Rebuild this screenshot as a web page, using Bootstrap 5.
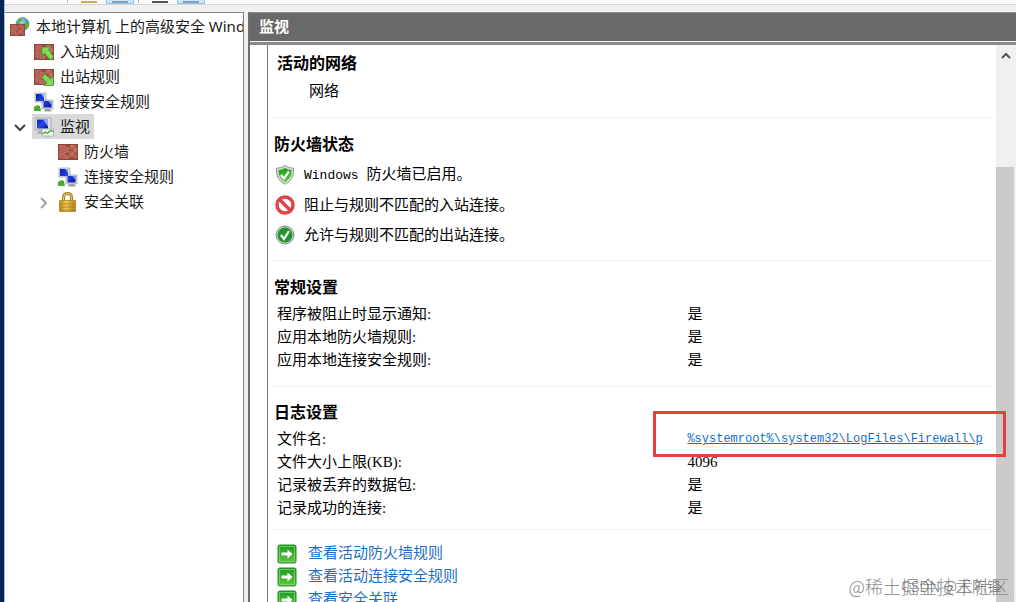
<!DOCTYPE html>
<html lang="zh-CN">
<head>
<meta charset="utf-8">
<meta name="viewport" content="width=device-width, initial-scale=1">
<title>高级安全 Windows 防火墙</title>
<link href="https://cdn.jsdelivr.net/npm/bootstrap@5.3.0/dist/css/bootstrap.min.css" rel="stylesheet">
<style>
  body { font-family: "Liberation Serif", "Noto Sans CJK SC", serif; font-size: 15px; line-height: 23px; color: #000; background: #f0f0f0; }
  .desktop-edge { width: 4px; background: #06245c; }
  .window { border-left: 1px solid #a9bccb; }
  .tools { height: 5px; background: #fdfdfd; border-bottom: 1px solid #d9d9d9; padding-left: 62px; }
  .tools .vr { min-height: 0; height: 3px; }
  .tool { height: 4px; border: 0; padding: 0 5px; background: transparent; }
  .tool span { display: block; height: 2px; }
  .tool.pressed { background: #cbe6fb; border: 1px solid #90c5ee; border-top: 0; }
  .panes { padding-top: 7px; }

  .tree-pane { width: 239px; margin-right: 4px; background: #fff; border: 1px solid #7f848a; border-left: 0; border-bottom: 0; padding: 1px 0 0 1px; font-family: "Noto Sans", "Noto Sans CJK SC", sans-serif; color: #1a1a1a; }
  .tree-pane ul ul { padding-left: 24px; }
  .tree-pane .level-top { padding-left: 4px; }
  .branch { display: flex; align-items: center; height: 25px; padding-left: 6px; }
  .twisty { width: 16px; height: 16px; margin-right: 4px; padding: 0; border: 0; background: transparent; display: flex; flex: none; }
  .node { display: flex; align-items: center; gap: 6px; height: 25px; padding: 0 4px 0 2px; border: 0; background: transparent; color: inherit; white-space: nowrap; }
  .node.selected { background: #d9d9d9; }
  .node svg { width: 20px; height: 20px; flex: none; }

  .detail-pane { min-width: 0; border-left: 2px solid #6e6e6e; border-top: 1px solid #8b8b8b; background: #fff; }
  .pane-title { height: 28px; padding-left: 9px; background: #696969; color: #fff; font-size: 15px; font-weight: 700; line-height: 28px; margin: 0; }
  .pane-rule { height: 4px; border-top: 1px solid #f5f5f5; background: #8a8a8a; }
  .report { min-width: 0; margin-left: 17px; border-left: 1px solid #777; }
  .block { margin: 0 3px 0 5px; border-bottom: 1px solid #f1f1f1; padding-top: 14px; }
  .block h2 { font-size: 16px; line-height: 24px; font-weight: 700; margin: 0 0 3px 1px; }
  .block.network { padding: 7px 0 11px 4px; }
  .block.network h2 { margin: 0; }
  .block.network p { line-height: 30px; margin: 0 0 0 32px; }
  .block.state { padding-bottom: 10px; padding-top: 15px; }
  .state li { height: 30px; display: flex; align-items: center; gap: 9px; padding-left: 2px; }
  .state svg { width: 20px; height: 20px; }
  .block.general { padding-bottom: 14px; padding-top: 15px; }
  .block.log { padding-bottom: 9px; }
  .facts { width: 100%; table-layout: fixed; margin-left: 4px; }
  .facts th { width: 57%; font-weight: 400; padding: 0; }
  .facts td { padding: 0; }
  .halfwidth { font-family: "Liberation Mono", monospace; font-size: 13px; white-space: pre; }
  .log-path { display: block; overflow: hidden; white-space: nowrap; font-family: "Liberation Mono", monospace; font-size: 12px; color: #0a6fcd; }
  .callout-box { top: -17px; right: -9px; bottom: -6px; left: -34px; border: 3px solid #e6403c; z-index: 3; pointer-events: none; }
  .jump { padding: 12px 0 0 9px; }
  .jump a { display: flex; align-items: center; gap: 11px; color: #1b6fc9; text-decoration: none; }
  .jump svg { width: 20px; height: 20px; }

  .scroll { width: 20px; background: #f0f0f0; }
  .scroll button { height: 22px; border: 0; padding: 0; background: transparent; }
  .scroll-thumb { margin: 100px 2px 0 0; background: #cbcbcb; }

  .stamp { right: 7px; bottom: 2px; color: #8c8c8c; font-family: "Noto Sans CJK SC", sans-serif; font-weight: 300; font-size: 18px; line-height: 28px; white-space: nowrap; z-index: 4; }
  .stamp.author { right: 14px; font-size: 15px; color: #777; }
</style>
</head>
<body class="vh-100 overflow-hidden position-relative">
<svg width="0" height="0" class="position-absolute" aria-hidden="true">
  <defs>
    <linearGradient id="screen" x1="0" y1="0" x2="1" y2="1"><stop offset="0" stop-color="#0a1cb8"/><stop offset=".5" stop-color="#2a48e0"/><stop offset="1" stop-color="#0714a0"/></linearGradient>
    <linearGradient id="leaf" x1="0" y1="0" x2="0" y2="1"><stop offset="0" stop-color="#1f9a22"/><stop offset="1" stop-color="#5fc83c"/></linearGradient>
    <linearGradient id="gold" x1="0" y1="0" x2="1" y2="0"><stop offset="0" stop-color="#b8891c"/><stop offset=".4" stop-color="#f0cc5a"/><stop offset="1" stop-color="#b98217"/></linearGradient>
    <radialGradient id="sea" cx=".4" cy=".3" r=".8"><stop offset="0" stop-color="#a5dcf6"/><stop offset="1" stop-color="#1464ae"/></radialGradient>
    <symbol id="bricks" viewBox="0 0 20 16">
      <path fill="#a3493c" d="M0 0h20v16H0z"/>
      <path fill="#bd6654" d="M1 1h5v2H1zM12 1h6v2h-6zM4 5h5v2H4zM15 5h4v2h-4zM1 9h5v2H1zM11 9h6v2h-6zM5 13h5v2H5z"/>
      <path fill="none" stroke="#cf9a8c" stroke-width=".6" d="M0 4h20M0 8h20M0 12h20M7 0v4M14 0v4M3 4v4M10 4v4M17 4v4M7 8v4M14 8v4M3 12v4M10 12v4M17 12v4"/>
      <path fill="none" stroke="#8a4036" stroke-width=".8" d="M.5 .5h19v15H.5z"/>
    </symbol>
    <symbol id="wall" viewBox="0 0 20 20"><use href="#bricks" x="0" y="2" width="20" height="16"/></symbol>
    <symbol id="globe-wall" viewBox="0 0 20 20">
      <circle cx="12.500" cy="7" r="6.500" fill="url(#sea)" stroke="#376f9c" stroke-width=".6"/>
      <path fill="#58b63c" d="M8 3q3-2.500 5-1l-1 2-2 1-1 3-2-1zM15 5l3-1q2 3 .5 6l-3 2-1-3 1-2z"/>
      <use href="#bricks" x="0" y="7" width="15" height="12"/>
    </symbol>
    <symbol id="wall-in" viewBox="0 0 20 20">
      <use href="#bricks" x="0" y="2" width="20" height="16"/>
      <path fill="#7edb58" stroke="#3d962b" stroke-width=".8" d="M8 5h9l-2.500 2.700 5.300 7-3.300 3.600-6-7L8 14z"/>
    </symbol>
    <symbol id="wall-out" viewBox="0 0 20 20">
      <use href="#bricks" x="0" y="2" width="20" height="16"/>
      <path fill="#7edb58" stroke="#3d962b" stroke-width=".8" d="M19.500 18.500h-9.500l2.700-2.700-5-5.500 3.300-3.300 5.500 5L19.500 9z"/>
    </symbol>
    <symbol id="two-screens" viewBox="0 0 20 20">
      <path fill="#d9dde2" stroke="#8f959c" stroke-width=".6" d="M1 1h11v9H1zM8 8h11v9H8z"/>
      <path fill="url(#screen)" d="M2 2h8v7H2zM9.500 9h8v6.500h-8z"/>
      <path fill="#7aa3ff" d="M7 2h3v4zM14.500 9h3v4z"/>
      <path fill="#9b9fa4" d="M11 17h5l2 2.500h-8z"/>
      <path fill="#48ad35" d="M0 19v-4q3-3 6-1l1 5z"/>
    </symbol>
    <symbol id="screen-chart" viewBox="0 0 20 20">
      <path fill="#dfe2e6" stroke="#92989e" stroke-width=".7" d="M1 1h16v12H1z"/>
      <path fill="url(#screen)" d="M3 2.500h11v9H3z"/><path fill="#86abff" d="M9 2.500h5v7z"/>
      <path fill="#aeb2b7" d="M5 13h6l1 4H3z"/>
      <path fill="#f3faf1" stroke="#90a6ae" stroke-width=".7" d="M8 12h11.500v7H8z"/>
      <path fill="none" stroke="#35a22c" stroke-width="1.200" d="M8.500 17l3-2 2 1.500 3-3 3 1"/>
    </symbol>
    <symbol id="padlock" viewBox="0 0 20 20">
      <path fill="none" stroke="#a98025" stroke-width="3" d="M5.500 10V5.500q0-4 4-4t4 4V10"/>
      <path fill="none" stroke="#ead184" stroke-width="1" d="M5.500 10V5.500q0-4 4-4t4 4V10"/>
      <path fill="url(#gold)" stroke="#a87918" stroke-width=".7" d="M1.500 8.500h16v11h-16z"/>
      <path stroke="#a57716" stroke-width=".8" d="M2 12h15M2 15h15M2 18h15"/>
    </symbol>
    <symbol id="go" viewBox="0 0 20 20">
      <rect x="1" y="1" width="18" height="18" rx="1.500" fill="url(#leaf)" stroke="#259127" />
      <path fill="none" stroke="#8bd777" stroke-width=".7" d="M2.500 2.500h15v15h-15z"/>
      <path fill="#fff" d="M4.500 8.500h6V5.500l5 4.500-5 4.500v-3H4.500z"/>
    </symbol>
  </defs>
</svg>

<div class="d-flex h-100">
  <div class="desktop-edge flex-shrink-0"></div>
  <div class="window d-flex flex-column flex-grow-1 overflow-hidden">
    <div class="tools d-flex flex-shrink-0" role="toolbar" aria-label="工具栏">
      <div class="vr"></div>
      <button class="tool ms-2" aria-label="打开"><span class="px-2" style="background:#cda956"></span></button>
      <button class="tool pressed ms-1" aria-label="显示控制台树"><span class="px-2" style="background:#829fb6"></span></button>
      <div class="vr ms-1"></div>
      <button class="tool ms-2" aria-label="导出列表"><span class="px-2" style="background:#4d5363"></span></button>
      <button class="tool pressed ms-1" aria-label="显示操作窗格"><span class="px-2" style="background:#829fb6"></span></button>
    </div>

    <div class="panes d-flex flex-grow-1">
      <nav class="tree-pane flex-shrink-0 overflow-hidden" aria-label="控制台树">
        <ul class="list-unstyled mb-0">
          <li>
            <div class="level-top"><button class="node ps-0"><svg><use href="#globe-wall"/></svg>本地计算机 上的高级安全 Windows 防火墙</button></div>
            <ul class="list-unstyled ps-0">
              <li class="branch"><span class="twisty"></span><button class="node"><svg><use href="#wall-in"/></svg>入站规则</button></li>
              <li class="branch"><span class="twisty"></span><button class="node"><svg><use href="#wall-out"/></svg>出站规则</button></li>
              <li class="branch"><span class="twisty"></span><button class="node"><svg><use href="#two-screens"/></svg>连接安全规则</button></li>
              <li>
                <div class="branch"><button class="twisty" aria-label="折叠"><svg viewBox="0 0 16 16"><path d="M3 6l5 5 5-5" fill="none" stroke="#444" stroke-width="2"/></svg></button><button class="node selected"><svg><use href="#screen-chart"/></svg>监视</button></div>
                <ul class="list-unstyled">
                  <li class="branch"><span class="twisty"></span><button class="node"><svg><use href="#wall"/></svg>防火墙</button></li>
                  <li class="branch"><span class="twisty"></span><button class="node"><svg><use href="#two-screens"/></svg>连接安全规则</button></li>
                  <li class="branch"><button class="twisty" aria-label="展开"><svg viewBox="0 0 16 16"><path d="M5 4l5 5-5 5" fill="none" stroke="#a0a0a0" stroke-width="2"/></svg></button><button class="node"><svg><use href="#padlock"/></svg>安全关联</button></li>
                </ul>
              </li>
            </ul>
          </li>
        </ul>
      </nav>

      <main class="detail-pane flex-grow-1 d-flex flex-column">
        <h1 class="pane-title flex-shrink-0">监视</h1>
        <div class="pane-rule flex-shrink-0"></div>
        <div class="d-flex flex-grow-1">
          <div class="report flex-grow-1">
            <section class="block network">
              <h2>活动的网络</h2>
              <p>网络</p>
            </section>
            <section class="block state">
              <h2>防火墙状态</h2>
              <ul class="list-unstyled mb-0">
                <li><svg viewBox="0 0 20 20"><path d="M10 .7q4 2.500 8.500 2.500 1 12-8.500 16Q.5 15.200 1.500 3.200 6 3.200 10 .7z" fill="#d8dcd8" stroke="#8f9a91"/><path d="M10 3q3 1.800 6.500 2 .5 8.500-6.500 12Q3 13.500 3.500 5 7 4.800 10 3z" fill="url(#leaf)"/><path d="M6 10l3 3.500L14 6.500" fill="none" stroke="#fff" stroke-width="2.200"/></svg><span><span class="halfwidth">Windows </span>防火墙已启用。</span></li>
                <li><svg viewBox="0 0 20 20"><circle cx="10" cy="10" r="8" fill="#fff" stroke="#dc4649" stroke-width="3.500"/><path d="M4.500 4.500l11 11" stroke="#dc4649" stroke-width="3.500"/></svg>阻止与规则不匹配的入站连接。</li>
                <li><svg viewBox="0 0 20 20"><circle cx="10" cy="10" r="9" fill="#c9cfc9" stroke="#8b958c"/><circle cx="10" cy="10" r="7.500" fill="#23942a"/><path d="M6 10l3 4 5-8" fill="none" stroke="#fff" stroke-width="2.200"/></svg>允许与规则不匹配的出站连接。</li>
              </ul>
            </section>
            <section class="block general">
              <h2>常规设置</h2>
              <table class="facts">
                <tr><th scope="row">程序被阻止时显示通知:</th><td>是</td></tr>
                <tr><th scope="row">应用本地防火墙规则:</th><td>是</td></tr>
                <tr><th scope="row">应用本地连接安全规则:</th><td>是</td></tr>
              </table>
            </section>
            <section class="block log">
              <h2>日志设置</h2>
              <table class="facts">
                <tr><th scope="row">文件名:</th><td class="position-relative"><a class="log-path text-decoration-underline" href="#">%systemroot%\system32\LogFiles\Firewall\p</a><span class="callout-box position-absolute"></span></td></tr>
                <tr><th scope="row">文件大小上限(KB):</th><td>4096</td></tr>
                <tr><th scope="row">记录被丢弃的数据包:</th><td>是</td></tr>
                <tr><th scope="row">记录成功的连接:</th><td>是</td></tr>
              </table>
            </section>
            <nav class="jump" aria-label="查看">
              <a href="#"><svg><use href="#go"/></svg>查看活动防火墙规则</a>
              <a href="#"><svg><use href="#go"/></svg>查看活动连接安全规则</a>
              <a href="#"><svg><use href="#go"/></svg>查看安全关联</a>
            </nav>
          </div>
          <div class="scroll flex-shrink-0 d-flex flex-column">
            <button aria-label="向上滚动"><svg width="12" height="12" viewBox="0 0 12 12" class="d-block mx-auto"><path d="M2 8l4-4 4 4" fill="none" stroke="#555" stroke-width="2"/></svg></button>
            <div class="scroll-thumb flex-grow-1"></div>
          </div>
        </div>
      </main>
    </div>
  </div>
</div>
<div class="stamp position-absolute">@稀土掘金技术社区</div>
<div class="stamp author position-absolute">CSDN @王陈锋</div>
<script src="https://cdn.jsdelivr.net/npm/bootstrap@5.3.0/dist/js/bootstrap.bundle.min.js"></script>
</body>
</html>
